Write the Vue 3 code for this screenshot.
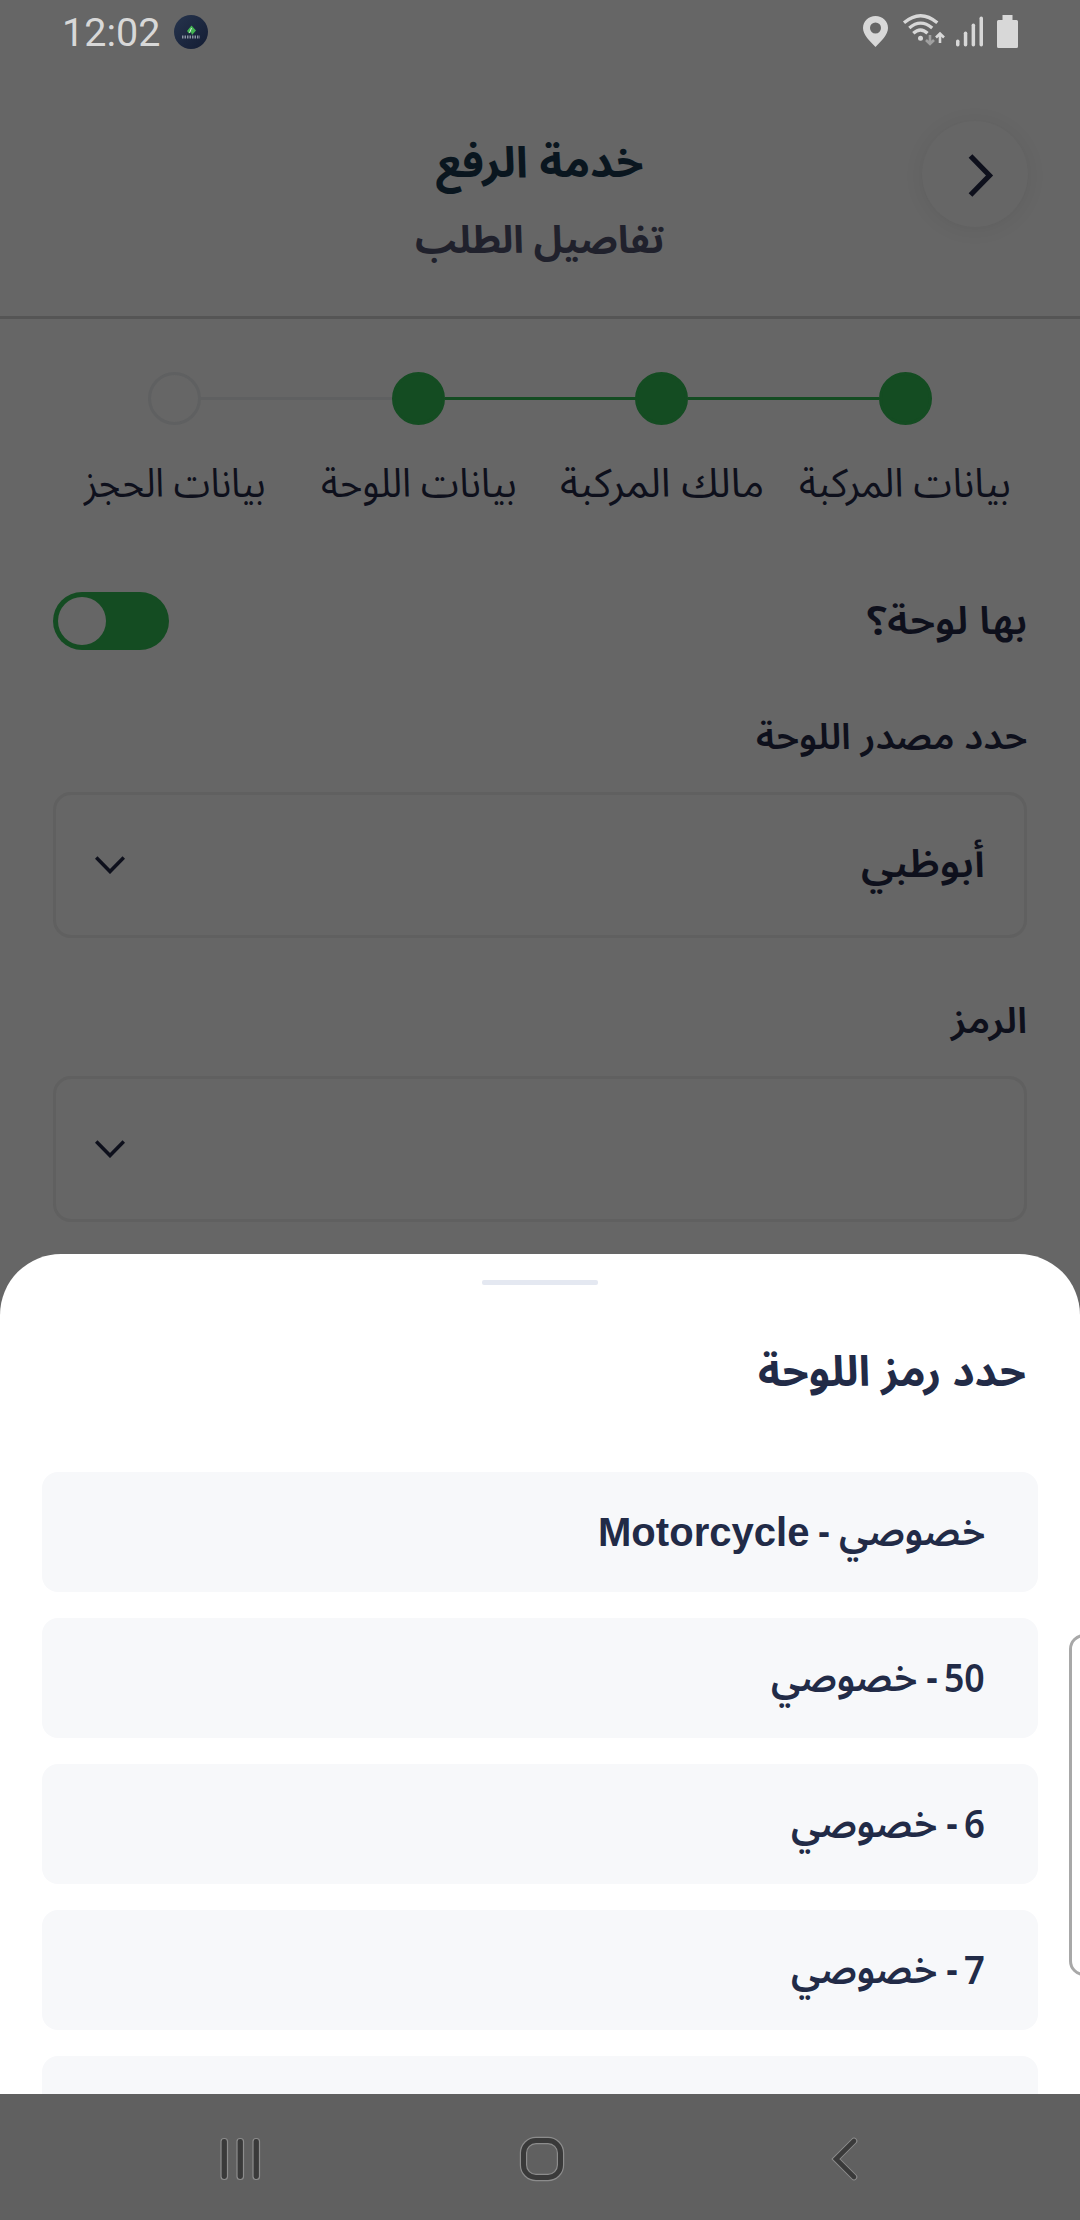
<script setup>
import { h, ref, onMounted } from 'vue'

// Single line of text scaled horizontally to a given width
const FitText = {
  props: { text: String, width: Number },
  setup(props) {
    const inner = ref(null)
    const scale = ref(1)
    onMounted(() => {
      scale.value = props.width / inner.value.offsetWidth
    })
    return () =>
      h('span', { class: 'fit', style: { width: props.width + 'px' } }, [
        h('span', { ref: inner, class: 'fit-inner', style: { transform: `scaleX(${scale.value})` } }, props.text),
      ])
  },
}

const steps = [
  { label: 'بيانات المركبة', width: 212, done: true },
  { label: 'مالك المركبة', width: 204, done: true },
  { label: 'بيانات اللوحة', width: 196, done: true },
  { label: 'بيانات الحجز', width: 182, done: false },
]

const fields = [
  { label: 'حدد مصدر اللوحة', labelWidth: 271, value: 'أبوظبي', valueWidth: 124 },
  { label: 'الرمز', labelWidth: 76, value: '', valueWidth: 0 },
]

const options = [
  [{ t: 'خصوصي', w: 146 }, { t: '-', w: 12 }, { t: 'Motorcycle', w: 211, latin: true }],
  [{ t: '50', w: 41, num: true }, { t: '-', w: 12 }, { t: 'خصوصي', w: 146 }],
  [{ t: '6', w: 21, num: true }, { t: '-', w: 12 }, { t: 'خصوصي', w: 146 }],
  [{ t: '7', w: 21, num: true }, { t: '-', w: 12 }, { t: 'خصوصي', w: 146 }],
  [],
]
</script>

<template>
  <div class="screen" dir="rtl">
    <div class="status" dir="ltr">
      <div class="status-left">
        <span class="clock">12:02</span>
        <svg class="app" viewBox="0 0 34 34">
          <defs>
            <linearGradient id="g" x1="0" y1="0" x2="1" y2="1">
              <stop offset="0" stop-color="#26344d" />
              <stop offset="1" stop-color="#131c33" />
            </linearGradient>
          </defs>
          <circle cx="17" cy="17" r="17" fill="url(#g)" />
          <path d="M17.500 10.500 L22 15.500 L18 20 L17 17 L15 18.500 L13 16 Z" fill="#43b552" />
          <path d="M17.500 13 L15.500 18" stroke="#d9e6dc" stroke-width="1" />
          <path d="M8 22 H26" stroke="#8b93a3" stroke-width="3" stroke-dasharray="1.5 1" />
        </svg>
      </div>
      <svg class="status-icons" viewBox="0 0 160 36" fill="#d8d8d8">
        <path fill-rule="evenodd" d="M15.500 4 C8.500 4 3 9.300 3 16 C3 23 10 29 15.500 35 C21 29 28 23 28 16 C28 9.300 22.500 4 15.500 4 Z M15.500 10.500 a5.500 5.500 0 1 1 0 11 a5.500 5.500 0 1 1 0 -11 Z" />
        <g fill="none" stroke="#d8d8d8" stroke-width="3.300">
          <path d="M44 10.800 Q60.500 -3.300 77.300 10.800" />
          <path d="M49.300 16 Q60.500 6.200 72.200 16" />
          <path d="M53.300 21.300 Q60.500 14.700 67.500 21.300" />
        </g>
        <circle cx="60.500" cy="26.300" r="2.500" />
        <path d="M70 23 V32 M66 28 L70 32 L74 28" fill="none" stroke="#a0a0a0" stroke-width="2.600" />
        <path d="M80 31 V22 M76 25.500 L80 21.500 L84 25.500" fill="none" stroke="#d8d8d8" stroke-width="2.600" />
        <rect x="96" y="27.500" width="3.500" height="7" rx="1.700" />
        <rect x="103.800" y="19.500" width="3.500" height="15" rx="1.700" />
        <rect x="111.600" y="11.500" width="3.500" height="23" rx="1.700" />
        <rect x="119.500" y="4.500" width="3.500" height="30" rx="1.700" />
        <path d="M142.500 3 H152.500 V8 H156.500 Q158 8 158 9.500 V34.500 Q158 36 156.500 36 H138.500 Q137 36 137 34.500 V9.500 Q137 8 138.500 8 H142.500 Z" />
      </svg>
    </div>

    <header class="header">
      <button class="back" type="button">
        <svg viewBox="0 0 106 106"><path d="M48.500 35 L67.500 54.500 L48.500 74" fill="none" stroke="#0e101c" stroke-width="5.200" /></svg>
      </button>
      <h1 class="title"><FitText text="خدمة الرفع" :width="208" /></h1>
      <h2 class="subtitle"><FitText text="تفاصيل الطلب" :width="249" /></h2>
    </header>

    <div class="steps">
      <div v-for="s in steps" :key="s.label" class="step" :class="{ done: s.done }">
        <span class="dot"></span>
        <span class="step-label"><FitText :text="s.label" :width="s.width" /></span>
      </div>
    </div>

    <div class="toggle-row">
      <span class="toggle-label"><FitText text="بها لوحة؟" :width="160" /></span>
      <span class="toggle"><span class="knob"></span></span>
    </div>

    <div v-for="f in fields" :key="f.label" class="field">
      <div class="label"><FitText :text="f.label" :width="f.labelWidth" /></div>
      <div class="select">
        <span class="value"><FitText v-if="f.value" :text="f.value" :width="f.valueWidth" /></span>
        <svg class="caret" viewBox="0 0 30 18"><path d="M1.200 1.500 L15 15.500 L28.800 1.500" fill="none" stroke="#0e101c" stroke-width="3.600" /></svg>
      </div>
    </div>

    <section class="sheet">
      <div class="grip"></div>
      <h3 class="sheet-title"><FitText text="حدد رمز اللوحة" :width="268" /></h3>
      <div class="options">
        <div v-for="(o, i) in options" :key="i" class="option">
          <FitText v-for="(r, j) in o" :key="j" :text="r.t" :width="r.w" :class="{ latin: r.latin, num: r.num, dash: r.t === '-' }" />
        </div>
      </div>
      <div class="edge"></div>
    </section>

    <nav class="nav" dir="ltr">
      <svg viewBox="0 0 1080 126">
        <g fill="#3a3a3a" stroke="#8c8c8c" stroke-width="1.200">
          <rect x="221" y="44.500" width="6.500" height="41" rx="3" />
          <rect x="237" y="44.500" width="6.500" height="41" rx="3" />
          <rect x="253" y="44.500" width="6.500" height="41" rx="3" />
        </g>
        <rect x="523.500" y="46.500" width="37" height="37" rx="12.500" fill="none" stroke="#8c8c8c" stroke-width="7.400" />
        <rect x="523.500" y="46.500" width="37" height="37" rx="12.500" fill="none" stroke="#3a3a3a" stroke-width="5" />
        <g fill="none" stroke-linecap="round">
          <path d="M854 47 L836 65 L854 83" stroke="#8c8c8c" stroke-width="6.600" />
          <path d="M854 47 L836 65 L854 83" stroke="#3a3a3a" stroke-width="4.600" />
        </g>
      </svg>
    </nav>
  </div>
</template>

<style>
html, body { margin: 0; background: #666; }
.fit { display: inline-block; white-space: nowrap; direction: rtl; text-align: right; }
.fit-inner { display: inline-block; transform-origin: 100% 50%; }
</style>

<style scoped>
.screen {
  position: relative;
  display: flex;
  flex-direction: column;
  width: 1080px;
  height: 2220px;
  overflow: hidden;
  background: #666;
  color: #0e101c;
  font-family: "Noto Sans Arabic", "Noto Kufi Arabic", "DejaVu Sans", sans-serif;
}
h1, h2, h3 { margin: 0; }
.status {
  display: flex;
  justify-content: space-between;
  height: 64px;
  padding: 0 60px 0 62px;
}
.status-left { display: flex; align-items: center; gap: 14px; height: 66px; }
.clock { font: 400 39.5px/66px Roboto, sans-serif; color: #d8d8d8; }
.app { width: 34px; height: 34px; margin-top: -2px; }
.status-icons { width: 160px; height: 36px; margin-top: 12px; }
.header {
  position: relative;
  display: flex;
  flex-direction: column;
  align-items: center;
  height: 252px;
  box-sizing: content-box;
  border-bottom: 3px solid #555;
}
.back {
  position: absolute;
  right: 52px;
  top: 57px;
  width: 106px;
  height: 106px;
  padding: 0;
  border: 0;
  border-radius: 50%;
  background: #666;
  box-shadow: 0 2px 20px rgba(0, 0, 0, 0.07);
}
.back svg { display: block; }
.title { margin-top: 70px; height: 77px; font-size: 43px; line-height: 60px; font-weight: 700; color: #0a161f; }
.subtitle { height: 60px; font-size: 38px; line-height: 60px; font-weight: 700; color: #20212c; }
.steps { display: flex; justify-content: space-between; padding: 53px 53px 0; }
.step { position: relative; display: flex; flex-direction: column; align-items: center; width: 243.5px; }
.step + .step::before {
  content: "";
  position: absolute;
  top: 25px;
  left: 148px;
  width: 191px;
  height: 3px;
  background: #5f6061;
}
.step.done::before { background: #144c22; }
.dot { box-sizing: border-box; width: 53px; height: 53px; border: 3px solid #5f6061; border-radius: 50%; }
.done .dot { background: #144c22; border-color: #144c22; }
.step-label { margin-top: 30px; height: 60px; font-size: 40px; line-height: 60px; }
.toggle-row { display: flex; justify-content: space-between; align-items: center; height: 58px; margin-top: 77px; padding: 0 53px; }
.toggle-label { font-size: 39px; line-height: 60px; font-weight: 600; padding-top: 2px; }
.toggle { display: flex; justify-content: flex-end; align-items: center; box-sizing: border-box; width: 116px; height: 58px; padding: 0 5px; border-radius: 29px; background: #144c22; }
.knob { width: 48px; height: 48px; border-radius: 50%; background: #666; }
.field { padding: 0 53px; height: 284px; flex: none; }
.toggle-row + .field { margin-top: 54px; }
.label { box-sizing: border-box; height: 88px; padding-top: 4px; font-size: 36px; line-height: 60px; font-weight: 600; }
.select { display: flex; justify-content: space-between; align-items: center; box-sizing: border-box; height: 146px; border: 3px solid #606060; border-radius: 18px; padding: 0 39px; }
.value { font-size: 39px; line-height: 60px; font-weight: 600; }
.caret { width: 30px; height: 18px; }
.sheet {
  position: absolute;
  top: 1254px;
  left: 0;
  right: 0;
  height: 840px;
  overflow: hidden;
  border-radius: 61px 61px 0 0;
  background: #fff;
  color: #222b47;
}
.grip { width: 116px; height: 5px; margin: 26px auto 0; border-radius: 2px; background: #e4e8f1; }
.sheet-title { height: 97px; margin-top: 53px; margin-bottom: 37px; padding: 0 54px; font-size: 42px; line-height: 70px; font-weight: 700; }
.options { display: flex; flex-direction: column; gap: 26px; padding: 0 42px; }
.option { display: flex; align-items: center; gap: 9px; flex: none; box-sizing: border-box; height: 120px; padding: 0 53px; border-radius: 16px; background: #f7f8fa; font-size: 39px; font-weight: 600; }
.latin, .dash { font-family: "Liberation Sans", sans-serif; }
.latin { font-size: 41px; }
.num { margin-left: -3px; font-family: "Noto Sans", sans-serif; font-size: 40px; line-height: 56px; padding-bottom: 3px; }
.edge { position: absolute; left: 1069px; top: 380px; width: 30px; height: 336px; border: 3px solid #a8a8a8; border-radius: 15px; background: #fff; }
.nav { position: absolute; left: 0; right: 0; bottom: 0; height: 126px; background: #606060; }
.nav svg { display: block; width: 1080px; height: 126px; }
</style>
